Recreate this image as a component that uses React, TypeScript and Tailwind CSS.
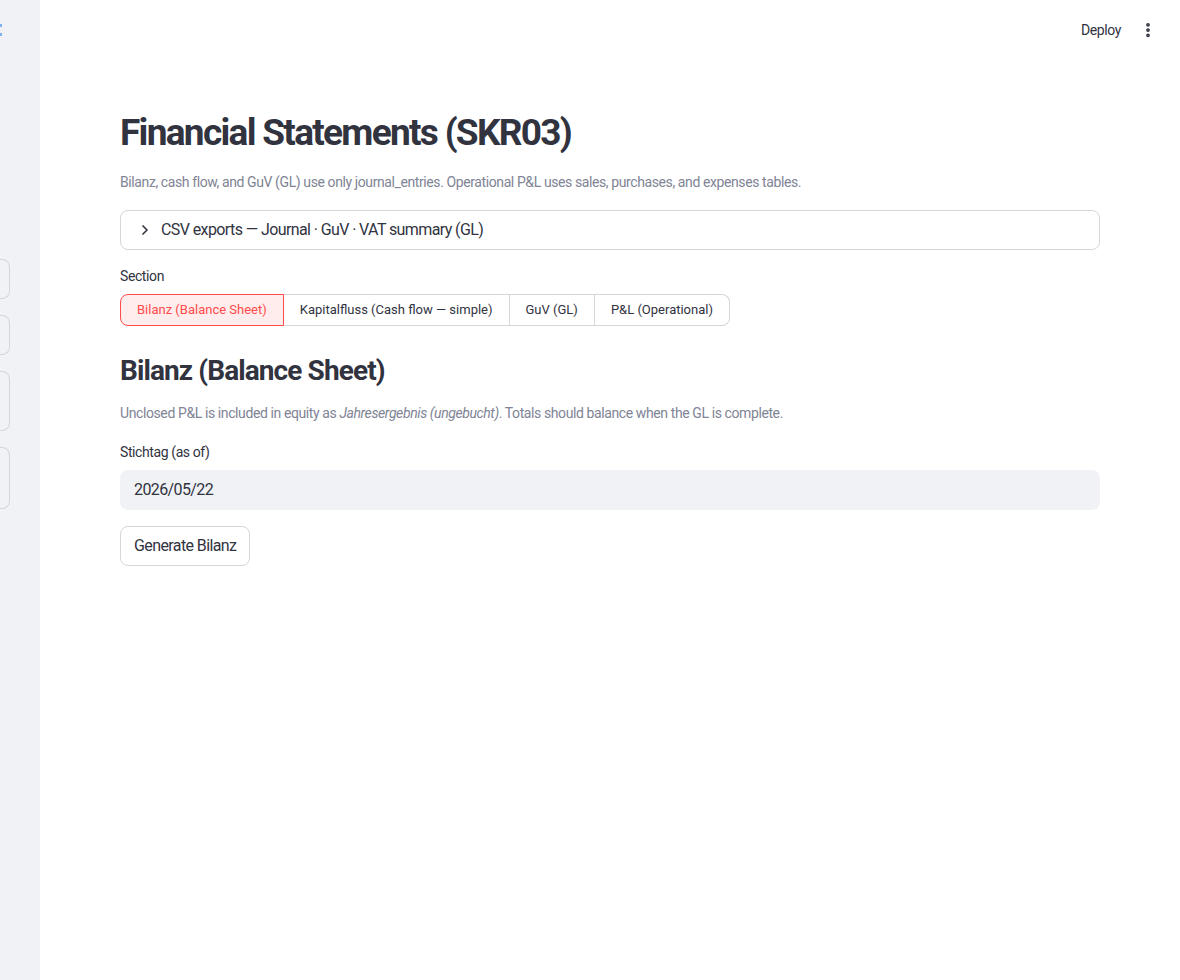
import { ChevronRight, EllipsisVertical } from 'lucide-react';

const segments = [
  'Bilanz (Balance Sheet)',
  'Kapitalfluss (Cash flow — simple)',
  'GuV (GL)',
  'P&L (Operational)',
];

const App = () => {
  return (
    <div
      className="flex min-h-[980px] bg-white text-[#31333f]"
      style={{ fontFamily: 'Roboto, "Noto Sans", sans-serif' }}
    >
      {/* collapsed sidebar strip */}
      <aside className="w-10 shrink-0 bg-[#f0f2f6] relative">
        <div className="absolute left-0 top-[24px] w-[2px] h-[3px] bg-[#7db3f5]" />
        <div className="absolute left-0 top-[33px] w-[2px] h-[3px] bg-[#7db3f5]" />
        <div className="flex flex-col gap-4 pt-[259px]">
          <div className="w-[10px] h-[40px] rounded-r-lg border border-l-0 border-[#d6d6d9]" />
          <div className="w-[10px] h-[40px] rounded-r-lg border border-l-0 border-[#d6d6d9]" />
          <div className="w-[10px] h-[60px] rounded-r-lg border border-l-0 border-[#d6d6d9]" />
          <div className="w-[10px] h-[62px] rounded-r-lg border border-l-0 border-[#d6d6d9]" />
        </div>
      </aside>

      <main className="flex-1 flex flex-col">
        {/* header */}
        <header className="h-[60px] flex items-center justify-end gap-[18px] pr-[23px]">
          <span className="text-sm tracking-[-0.4px]">Deploy</span>
          <EllipsisVertical className="w-[18px] h-[18px]" strokeWidth={3} />
        </header>

        <div className="w-[980px] mx-auto flex flex-col">
          <h1 className="mt-[49px] text-[37px] leading-[48px] font-bold tracking-[-1.7px]">
            Financial Statements (SKR03)
          </h1>
          <p className="mt-[15px] text-sm leading-5 text-[#808495] tracking-[-0.4px]">
            Bilanz, cash flow, and GuV (GL) use only journal_entries. Operational P&amp;L uses sales, purchases, and expenses tables.
          </p>

          {/* expander */}
          <div className="mt-[18px] h-10 rounded-lg border border-[#d6d6d9] flex items-center px-4 gap-2">
            <ChevronRight className="w-4 h-4" strokeWidth={2.5} />
            <span className="text-base tracking-[-0.6px]">CSV exports — Journal · GuV · VAT summary (GL)</span>
          </div>

          <div className="mt-4 text-sm leading-5 tracking-[-0.4px]">Section</div>
          <div className="mt-2 flex">
            {segments.map((s, i) => (
              <div
                key={s}
                className={
                  i === 0
                    ? 'h-8 px-4 flex items-center text-[13px] rounded-l-lg border border-[#ff4b4b] bg-[#ffeded] text-[#ff4b4b]'
                    : i === segments.length - 1
                    ? 'h-8 px-4 flex items-center text-[13px] rounded-r-lg border border-l-0 border-[#d6d6d9]'
                    : 'h-8 px-4 flex items-center text-[13px] border border-l-0 border-[#d6d6d9]'
                }
              >
                {s}
              </div>
            ))}
          </div>

          <h2 className="mt-[25px] text-[28px] leading-10 font-bold tracking-[-0.9px]">Bilanz (Balance Sheet)</h2>
          <p className="mt-3 text-sm leading-5 text-[#808495] tracking-[-0.4px]">
            Unclosed P&amp;L is included in equity as <em>Jahresergebnis (ungebucht)</em>. Totals should balance when the GL is complete.
          </p>

          <div className="mt-[19px] text-sm leading-5 tracking-[-0.4px]">Stichtag (as of)</div>
          <div className="mt-2 h-10 rounded-lg bg-[#f0f2f6] flex items-center px-[14px] text-base tracking-[-0.6px]">
            2026/05/22
          </div>

          <div className="mt-4">
            <button className="h-10 px-[13px] rounded-lg border border-[#d6d6d9] bg-white text-base tracking-[-0.6px]">
              Generate Bilanz
            </button>
          </div>
        </div>
      </main>
    </div>
  );
};

export default App;
